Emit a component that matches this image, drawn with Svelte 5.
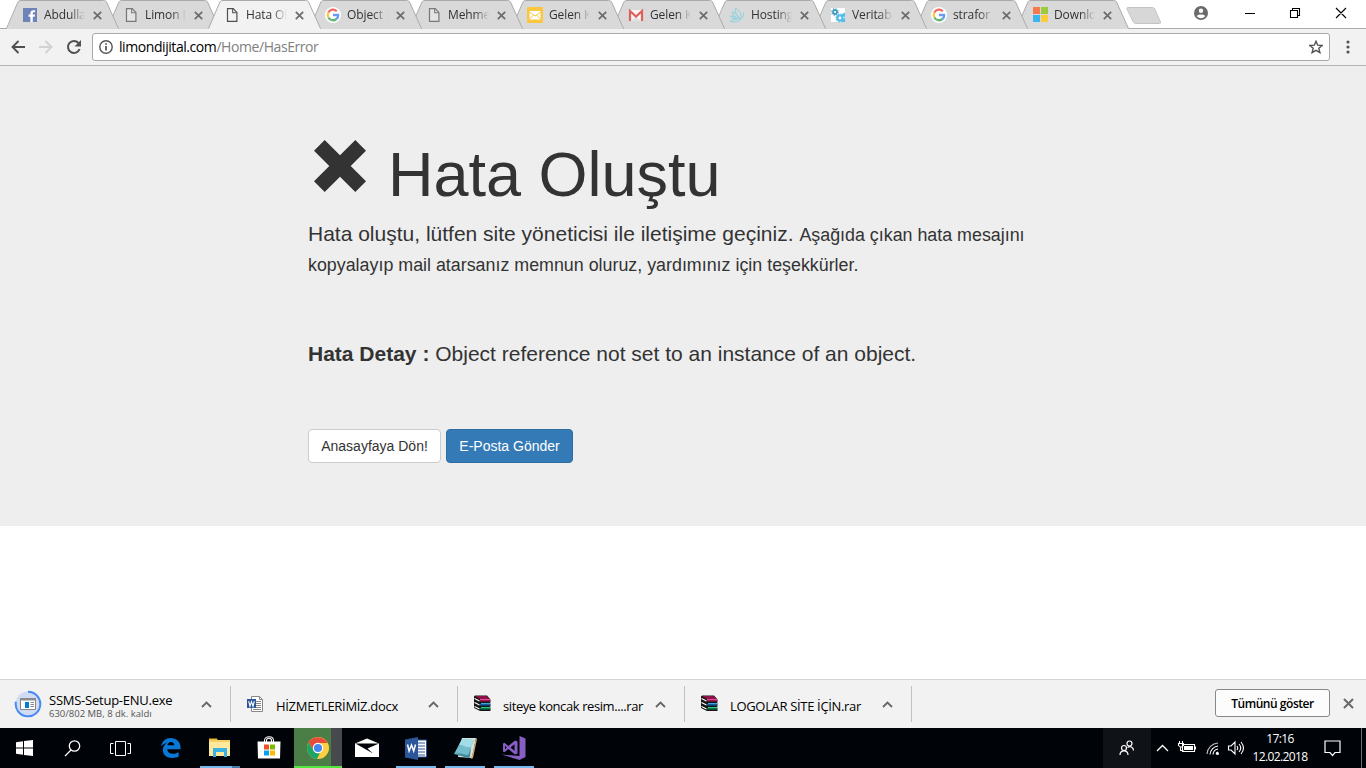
<script>
  const tabs = [
    { icon: 'facebook', title: 'Abdulla' },
    { icon: 'doc', title: 'Limon D' },
    { icon: 'doc', title: 'Hata Ol', active: true },
    { icon: 'google', title: 'Object r' },
    { icon: 'doc', title: 'Mehme' },
    { icon: 'slides', title: 'Gelen K' },
    { icon: 'gmail', title: 'Gelen K' },
    { icon: 'bird', title: 'Hosting' },
    { icon: 'gears', title: 'Veritaba' },
    { icon: 'google', title: 'strafor l' },
    { icon: 'microsoft', title: 'Downlo' }
  ];
  const downloads = [
    { icon: 'setup', name: 'SSMS-Setup-ENU.exe', note: '630/802 MB, 8 dk. kaldı', ls: -0.24 },
    { icon: 'docx', name: 'HİZMETLERİMİZ.docx', ls: -0.3 },
    { icon: 'rar', name: 'siteye koncak resim....rar', ls: -0.41 },
    { icon: 'rar', name: 'LOGOLAR SİTE İÇİN.rar', ls: -0.33 }
  ];
  const apps = ['edge', 'files', 'store', 'chrome', 'mail', 'word', 'notes', 'vs'];
</script>

{#snippet cross(size = 9)}
  <svg class="cross" width={size} height={size} viewBox="0 0 9 9"><path d="M.8.8 8.2 8.2M8.2.8.8 8.2" fill="none" stroke="currentColor" stroke-width="1.7" /></svg>
{/snippet}

{#snippet favicon(name)}
  <svg width="16" height="16" viewBox="0 0 16 16">
    {#if name === 'facebook'}
      <path fill="#6e83b7" d="M1 1h14v14H1z" />
      <path fill="#fff" d="M8.4 15V9.8H6.6V7.6h1.8V6.2c0-2 1.2-3 3-3h1.7v2.1h-1.2c-.9 0-1.1.4-1.1 1.1v1.2H13l-.3 2.2h-1.9V15z" />
    {:else if name === 'doc'}
      <path fill="#f4f4f4" fill-opacity=".4" stroke="currentColor" stroke-width="1.2" d="M3.500 1.600h5.700l3.700 3.800v9H3.500z" />
      <path fill="none" stroke="currentColor" stroke-width="1.100" d="M8.700 1.800v4h4" />
    {:else if name === 'google'}
      <circle cx="8" cy="8" r="8" fill="#fff" />
      <g fill="none" stroke-width="2.3">
        <path stroke="#ef6a5f" d="M3.3 5.6A5.2 5.2 0 0 1 11.8 4.3" />
        <path stroke="#fbc84a" d="M3.4 10.4A5.2 5.2 0 0 1 3.3 5.6" />
        <path stroke="#63b879" d="M11.4 12A5.2 5.2 0 0 1 3.4 10.4" />
        <path stroke="#6b9cf3" d="M8 8h5.2c.1 1.6-.5 3-1.8 4" />
      </g>
    {:else if name === 'slides'}
      <rect width="16" height="16" rx="1" fill="#fbc740" />
      <path fill="#fff" d="M2.500 4h11v8.500h-11z" />
      <path fill="none" stroke="#fbc740" stroke-width="1" d="m2.500 5 5.500 4 5.500-4M2.500 12l4-4M13.500 12l-4-4" />
    {:else if name === 'gmail'}
      <path fill="#f7f7f7" d="M1 3h14v11H1z" />
      <path fill="#e2e2e2" d="M3 14 8 9.500 13 14z" />
      <path fill="none" stroke="#df6057" stroke-width="2.200" d="M2 14V4l6 5.600L14 4v10" />
    {:else if name === 'bird'}
      <g fill="none" stroke="#77cfdf" stroke-width=".8">
        <path d="M1 14.500c3-2 5-2.500 8-2.500 4 0 6-2.500 5.500-6.500M1 14.500c5 .8 9 .5 11.500-3" />
        <path d="M11.500 11C8 10 5.500 5 6.500 1c3 2 5.500 5 6 9" />
        <path d="M9 11.500C5.500 10.500 4 8 3.300 5c3 .8 5.500 3 6.700 5.500" />
        <path d="M7 12C4.500 11.500 2.500 10.500 1.500 9c2.500 0 4.500.5 6.500 2" />
      </g>
    {:else if name === 'gears'}
      <path fill="#fff" d="M1 1h14v14H1z" />
      <circle cx="5" cy="5" r="2" fill="none" stroke="#3f9ac0" stroke-width="1.800" />
      <circle cx="5" cy="5" r="3.200" fill="none" stroke="#3f9ac0" stroke-width="1.200" stroke-dasharray="1.250 1.260" />
      <circle cx="10" cy="11" r="2.600" fill="none" stroke="#55bdeb" stroke-width="2.400" />
      <circle cx="10" cy="11" r="4" fill="none" stroke="#55bdeb" stroke-width="1" stroke-dasharray="1.600 1.540" />
      <path fill="#55bdeb" d="m12 7 3-1.500V15h-3z" /><circle cx="14" cy="10.500" r="1" fill="#b9e6f9" />
    {:else if name === 'microsoft'}
      <path fill="#f8784f" d="M1 0h7v7H1z" /><path fill="#9ccb3b" d="M9 0h7v7H9z" />
      <path fill="#3ab5f1" d="M1 8h7v7H1z" /><path fill="#fecb3a" d="M9 8h7v7H9z" />
    {/if}
  </svg>
{/snippet}

{#snippet fileIcon(name)}
  {#if name === 'setup'}
    <svg class="setup" width="28" height="28" viewBox="0 0 28 28">
      <circle cx="14" cy="14" r="12.500" fill="#d0dcf4" />
      <path d="M14 1.700A12.300 12.300 0 1 1 1.900 11.800" fill="none" stroke="#4a89f3" stroke-width="2" />
      <path fill="#fff" stroke="#858585" d="M6.500 8.500h15v11h-15z" />
      <path fill="#8b8b8b" d="M6 8h16v2.500H6z" /><path fill="#0878d5" d="M11 12h4v6h-4z" />
      <path stroke="#888" d="M16.500 12.500h3.500M16.500 14.500h3.500M16.500 16.500h3.500" />
    </svg>
  {:else if name === 'docx'}
    <svg width="16" height="16" viewBox="0 0 16 16">
      <path fill="#fff" stroke="#888" d="M4.500.5h8l3 3v12h-11z" /><path fill="none" stroke="#888" d="M12.500.5v3h3M9 5.500h5M9 7.500h5M9 9.500h5M9 11.500h5M6 13.500h8" />
      <path fill="#2b579a" d="M0 3h9v9H0z" /><path d="m1.700 5.200 1.300 5 1.500-4.500 1.500 4.500 1.300-5" fill="none" stroke="#fff" stroke-width="1.100" />
    </svg>
  {:else}
    <svg class="rar" width="17" height="17" viewBox="0 0 17 17">
      <path fill="#161616" d="M0 1.500 1 .5h12l3.500 4v3l-1 .5 1 .5v3l-1 .5 1 .5v3.500H6L0 13z" />
      <path fill="#8e1248" d="m1.500 1.500.5-.5h10.500l3 3H6z" /><path fill="#e54d92" d="M6 4h10v1H6z" /><path fill="#9c1451" d="M6 5h10v1.500H6z" />
      <path fill="#3da7e5" d="M7 8h9v1H7z" /><path fill="#0f62a8" d="M6 9h10v1.500H6z" />
      <path fill="#2fc58f" d="M7 12h9v1H7z" /><path fill="#087a45" d="M6 13h10v1.500H6z" />
      <path fill="none" stroke="#fff" stroke-width="1.100" d="m.5 3.500 5 2.500M.5 7.500l5 2.500M.5 11.500l5 2.500" />
    </svg>
  {/if}
{/snippet}

{#snippet appIcon(name)}
  <svg width="26" height="26" viewBox="0 0 26 26">
    {#if name === 'edge'}
      <path fill="#0878d7" d="M3 11.600C4 6 8 3 12.500 3 18.500 3 22.500 7 22.500 12v2.200H9.300c.2 3.300 2.900 4.600 6 4.600 2.100 0 4-.6 5.400-1.500v4.300C19 22.600 16.800 23 14.500 23 8.300 23 4.800 19.500 4.800 15c0-3.200 1.700-5.800 4.700-7.200C6.900 8.100 4.700 9.400 3 11.600Zm6.400-1.400h6.900c0-2-1.200-3.300-3.300-3.300-1.900 0-3.200 1.300-3.600 3.300Z" />
    {:else if name === 'files'}
      <path fill="#e9bb35" d="M2 3.500h8l1 2.500H2z" /><path fill="#ffe79c" d="M2 6h21v15H2z" /><path fill="#f3cf68" d="M2 5h21v2H2z" />
      <path fill="#38b1e4" d="M6 13h14v9h-3v-5H9v5H6z" />
    {:else if name === 'store'}
      <path d="M8.500 7V5.500c0-5 9-5 9 0V7M10.500 7V5.500c0-3 5-3 5 0V7" fill="none" stroke="#fff" stroke-width="1.100" /><path fill="#fff" d="M1.500 6.500h23L24 23.500H2z" />
      <path fill="#f25022" d="M8 9.500h5v5H8z" /><path fill="#7fba00" d="M14 9.500h5v5h-5z" /><path fill="#00a4ef" d="M8 15.500h5v5H8z" /><path fill="#ffb900" d="M14 15.500h5v5h-5z" />
    {:else if name === 'chrome'}
      <circle cx="13" cy="13" r="11" fill="#ffcf41" />
      <path fill="#e64b3c" d="M3.500 7.500A11 11 0 0 1 22.600 8H13a5 5 0 0 0-4.400 7.500z" />
      <path fill="#1ba566" d="M3.500 7.500 8.600 15.500A5 5 0 0 0 15 17.700L12 24A11 11 0 0 1 3.500 7.500Z" />
      <circle cx="13" cy="13" r="5.200" fill="#fff" /><circle cx="13" cy="13" r="4.100" fill="#4688f1" />
    {:else if name === 'mail'}
      <path fill="#fff" d="m1 8.500 12-5 12 5V22H1z" /><path fill="#000307" d="M1.500 8.500H25L13.500 13.500l5.500 5z" />
    {:else if name === 'word'}
      <path fill="#fff" stroke="#2b579a" d="M14 5h9.500v17H14z" /><path stroke="#2b579a" stroke-width="1.200" d="M15 8h7M15 11h7M15 14h7M15 17h7M15 20h7" />
      <path fill="#2b579a" d="M2 4.500 15 2v23L2 22.500z" /><path fill="none" stroke="#fff" stroke-width="1.500" d="m4.500 9.500 1.600 6.500L8.500 10l2.200 6 1.800-6.500" />
    {:else if name === 'notes'}
      <path fill="#d5e2e4" d="M10 3h14l-4 20-14-1z" /><path fill="#72bccb" d="M10 4 22 5l-6 15L2 19z" /><path fill="#a2dce4" d="m10 4 12 1-3 7C13 13 9 9 7 10z" />
      <path fill="#438c9c" d="M2 19c5-1 8 0 14 1l3-8-1 10-2 1z" /><path fill="#d1a865" d="m24 3 1 1-4 19-2 1z" />
    {:else}
      <path fill="#875fc4" d="m18.500 1 6 2.500V22l-6 3L.5 19.500l18 1.500z" />
      <path fill="#875fc4" fill-rule="evenodd" d="m2 8.500 1.500-.7 3.800 3.200L14 5.500l2.500 1v12l-2.500 1-6.700-5.500-3.800 3.200L2 16.500zm2 2.300v3.500l1.800-1.800zM9.500 12.500l4 3.200V9.300z" />
    {/if}
  </svg>
{/snippet}

<div class="screen">
  <header class="tabstrip">
    <div class="tabs">
      {#each tabs as tab, i}
        <div class="tab" class:active={tab.active} style:z-index={tab.active ? 30 : 20 - i}>
          <svg class="shape" width="114" height="29" viewBox="0 0 114 29">
            <path class="fill" d="M0 29 1 28.500L11.500 3C12.500 1 13 .5 15 .5H97.500C99.500.5 100 1 101 3L112.500 28.500V29Z" />
            <path d="M.5 28.500 11.500 3C12.500 1 13 .5 15 .5H97.500C99.500.5 100 1 101 3L112.500 28.500" fill="none" stroke="#aaa" />
          </svg>
          <span class="favicon">{@render favicon(tab.icon)}</span>
          <span class="title">{tab.title}</span>
          {@render cross()}
        </div>
      {/each}
    </div>
    <svg class="newtab" width="36" height="19" viewBox="0 0 36 19"><path d="M1.500 1.500h25q1.500 0 2.200 1.500L34.500 16q.5 1.500-1 1.500H10q-2 0-3-2L1 3q-.5-1.500.5-1.500z" fill="#d7d7d7" stroke="#c4c4c4" /></svg>
    <svg class="user" width="14" height="14" viewBox="0 0 14 14"><circle cx="7" cy="7" r="7" fill="#6b6b6b" /><circle cx="7" cy="4.800" r="2.200" fill="#fff" /><path d="M2.700 10.300C3.500 7.800 10.500 7.800 11.300 10.300Q7 14 2.700 10.300" fill="#fff" /></svg>
    <svg class="controls" width="104" height="12" viewBox="0 0 104 12"><path d="M1 6.500h10M46.500 3.500h7v7h-7zM48.500 3V1.500h7v7H54M92 1l10 10M102 1 92 11" fill="none" stroke="#000" stroke-width="1.100" /></svg>
  </header>

  <nav class="toolbar">
    <svg class="nav" width="72" height="16" viewBox="0 0 72 16">
      <path d="M15 8H2.500M8.500 2l-6 6 6 6" fill="none" stroke="#505050" stroke-width="1.900" />
      <path d="M29 8h12.500M35.500 2l6 6-6 6" fill="none" stroke="#d2d2d2" stroke-width="1.900" />
      <path d="M68.500 4A6 6 0 1 0 69.600 10" fill="none" stroke="#505050" stroke-width="2" /><path d="M71 1v6.500h-6.500z" fill="#505050" />
    </svg>
    <div class="omnibox">
      <svg width="14" height="14" viewBox="0 0 14 14"><circle cx="7" cy="7" r="6.200" fill="none" stroke="#555" stroke-width="1.400" /><path d="M7 6v4.500M7 3.200v1.600" stroke="#444" stroke-width="1.600" /></svg>
      <span class="url">limondijital.com<i>/Home/HasError</i></span>
      <svg class="star" width="14" height="14" viewBox="0 0 14 14"><path d="m7 1.300 1.700 3.900 4.500.3-3.400 2.800 1.100 4.300L7 10.300l-3.900 2.300 1.100-4.300L.8 5.500l4.500-.3z" fill="none" stroke="#505050" stroke-width="1.400" /></svg>
    </div>
    <svg class="menu" width="4" height="14" viewBox="0 0 4 14"><g fill="#555"><circle cx="2" cy="2" r="1.600" /><circle cx="2" cy="7" r="1.600" /><circle cx="2" cy="12" r="1.600" /></g></svg>
  </nav>

  <main>
    <section class="jumbotron">
      <h1>
        <svg width="52" height="52" viewBox="0 0 52 52"><path d="M10.700 0 26 15.300 41.300 0 52 10.700 36.700 26 52 41.300 41.300 52 26 36.700 10.700 52 0 41.300 15.300 26 0 10.700z" fill="#333" /></svg>
        <span>Hata Oluştu</span>
      </h1>
      <p class="message">Hata oluştu, lütfen site yöneticisi ile iletişime geçiniz. <small>Aşağıda çıkan hata mesajını kopyalayıp mail atarsanız memnun oluruz, yardımınız için teşekkürler.</small></p>
      <p class="detail"><b>Hata Detay :</b> Object reference not set to an instance of an object.</p>
      <div class="buttons"><button class="home">Anasayfaya Dön!</button><button class="primary">E-Posta Gönder</button></div>
    </section>
  </main>

  <aside class="downloads">
    {#each downloads as item}
      <div class="download" class:busy={item.note}>
        <span class="file">{@render fileIcon(item.icon)}</span>
        <div class="label"><span style:letter-spacing="{item.ls}px">{item.name}</span>{#if item.note}<small>{item.note}</small>{/if}</div>
        <svg class="chevron" width="11" height="7" viewBox="0 0 11 7"><path d="m1 6 4.500-4.500L10 6" fill="none" stroke="#666" stroke-width="1.800" /></svg>
      </div>
    {/each}
    <button class="showall">Tümünü göster</button>
    {@render cross(11)}
  </aside>

  <footer class="taskbar">
    <div class="system"><svg width="17" height="16" viewBox="0 0 17 16"><path fill="#fff" d="M0 2.300 7 1.300v6.200H0zM8 1.100 17 0v7.500H8zM0 8.500h7v6.200l-7-1zM8 8.500h9V16l-9-1.100z" /></svg></div>
    <div class="system"><svg width="17" height="17" viewBox="0 0 17 17"><circle cx="10.500" cy="6" r="5.200" fill="none" stroke="#fff" stroke-width="1.300" /><path d="m7 10-6 6" stroke="#fff" stroke-width="1.300" /></svg></div>
    <div class="system"><svg width="21" height="15" viewBox="0 0 21 15"><path d="M5.500.5h10v14h-10zM3.500 2.500h-3v10h3M17.500 2.500h3v10h-3" fill="none" stroke="#fff" /></svg></div>
    <div class="apps">
      {#each apps as app}<div class="app {app}">{@render appIcon(app)}</div>{/each}
    </div>
    <div class="people"><svg width="16" height="16" viewBox="0 0 16 16"><g fill="none" stroke="#fff" stroke-width="1.200"><circle cx="10.500" cy="3.500" r="2.500" /><circle cx="5" cy="8" r="2.500" /><path d="M1 15c0-5.500 8-5.500 8 0M8.500 7.500C11 5.500 14.500 7 14.500 10.500" /></g></svg></div>
    <svg class="tray" width="89" height="16" viewBox="0 0 89 16">
      <path d="m1 11 5.500-5.500L12 11" fill="none" stroke="#fff" stroke-width="1.300" />
      <path d="M26.500 4.500h12v7h-12zM39.500 6.500v3M24.500 7.500v3h3M22.500 3.500h5v2q-2.500 3-5 0zM23.500 3V1M26.500 3V1" fill="none" stroke="#fff" stroke-width="1.100" /><path fill="#fff" d="M28 6h9v4h-9z" />
      <g fill="none" stroke="#fff" stroke-width="1.100"><path d="M51 14A12 12 0 0 1 62 3" opacity=".75" /><path d="M54 14.500A9 9 0 0 1 62 6M57 14.500A6 6 0 0 1 62 9M60 14a3 3 0 0 1 2-2" /></g><circle cx="61.500" cy="13.500" r="1.500" fill="#fff" />
      <path d="M72.500 6h2.500l4-4v12l-4-4h-2.500zM81 6q1.500 2 0 4M83 4q3.500 4 0 8M85 2q5 6 0 12" fill="none" stroke="#fff" stroke-width="1.100" />
    </svg>
    <div class="clock"><span>17:16</span><span>12.02.2018</span></div>
    <svg class="notify" width="17" height="17" viewBox="0 0 17 17"><path d="M1 1h15v11.500h-5L8.500 15.500 6 12.500H1z" fill="none" stroke="#fff" stroke-width="1.200" /></svg>
    <div class="desktop"></div>
  </footer>
</div>

<style>
  :global(body) { margin: 0; overflow: hidden; }
  .screen { width: 1366px; height: 768px; display: flex; flex-direction: column; background: #fff; font-family: 'Open Sans', 'Noto Sans', sans-serif; color: #000; }
  svg { display: block; flex: none; }
  button { font: inherit; box-sizing: border-box; padding: 0; white-space: nowrap; }
  .cross { color: #6b6b6b; }

  .tabstrip { height: 29px; box-sizing: border-box; display: flex; background: linear-gradient(#aaa, #aaa) 0 28px / 100% 1px no-repeat #fff; }
  .tabs { display: flex; padding-left: 6px; width: 1121px; flex: none; isolation: isolate; }
  .tab { width: 114px; height: 29px; margin-right: -13px; position: relative; isolation: isolate; display: flex; align-items: center; flex: none; box-sizing: border-box; padding-left: 16px; color: #777; }
  .shape { position: absolute; inset: 0; z-index: -1; }
  .fill { fill: #d9d9d9; }
  .tab:not(.active) { background: linear-gradient(#aaa, #aaa) 1px 28px / 112px 1px no-repeat; }
  .active { color: #505050; }
  .active .fill { fill: #f2f2f2; }
  .favicon { margin-top: 1px; }
  .title { width: 41px; margin-left: 6px; overflow: hidden; white-space: nowrap; font-size: 12px; letter-spacing: -.1px; line-height: 18px; color: #333; mask-image: linear-gradient(90deg, #000 64%, transparent 100%); }
  .tab .cross { margin: 1px 0 0 8px; }
  .newtab { margin: 6px 0 0 -1px; }
  .user { margin: 6px 0 0 32px; }
  .controls { margin: 7px 0 0 36px; }

  .toolbar { height: 37px; box-sizing: border-box; display: flex; align-items: center; background: #f2f2f2; border-bottom: 1px solid #b5b5b5; padding-left: 10px; }
  .omnibox { display: flex; align-items: center; width: 1238px; height: 28px; margin-left: 10px; box-sizing: border-box; border: 1px solid #a9a9a9; border-radius: 3px; background: #fff; padding: 0 6px; }
  .url { margin-left: 6px; font-size: 14px; line-height: 20px; letter-spacing: -.43px; }
  .url i { font-style: normal; color: #808080; }
  .star { margin-left: auto; }
  .menu { margin-left: 16px; }

  main { height: 613px; font-family: 'Liberation Sans', Arial, sans-serif; color: #333; }
  .jumbotron { height: 460px; box-sizing: border-box; padding: 73px 308px 0; background: #eee; }
  h1 { margin: 0; display: flex; height: 80px; font-size: 63px; font-weight: 400; line-height: 71px; padding-left: 5.5px; }
  h1 svg { margin-top: .5px; }
  h1 span { margin-left: 22.5px; }
  p { margin: 0; font-size: 21px; line-height: 30px; }
  .message { height: 120px; line-height: 1.42; }
  .message small { font-size: 17.85px; line-height: 1; }
  .detail { height: 90px; }
  .buttons { display: flex; gap: 5px; font-size: 14px; }
  .buttons button { height: 34px; border: 1px solid #ccc; border-radius: 4px; background: #fff; color: #333; width: 133px; }
  .buttons .primary { background: #337ab7; border-color: #2e6da4; color: #fff; width: 127px; }

  .downloads { height: 49px; box-sizing: border-box; border-top: 1px solid #d5d5d5; background: #f2f2f2; display: flex; align-items: center; }
  .download { box-sizing: border-box; width: 227px; height: 36px; border-right: 1px solid #c2c2c2; display: flex; align-items: center; padding-left: 16px; }
  .download.busy { width: 231px; padding-left: 14px; }
  .file { width: 29px; flex: none; }
  .file svg { margin-top: -1px; }
  .busy .file { width: 35px; }
  .label { display: flex; flex-direction: column; width: 143px; font-size: 13px; line-height: 15px; padding-top: 5px; white-space: nowrap; }
  .busy .label { padding-top: 3px; }
  .label small { font-size: 9.5px; line-height: 11px; color: #555; }
  .chevron { margin-left: 9px; }
  .showall { width: 115px; height: 28px; margin: -2px 13px 0 auto; border: 1px solid #888; border-radius: 3px; background: #fcfcfc; font-size: 12px; font-weight: 600; letter-spacing: -.45px; }
  .downloads > .cross { margin: -2px 12px 0 0; }

  .taskbar { height: 40px; background: #000307; display: flex; align-items: center; color: #fff; }
  .system { width: 48px; height: 40px; display: flex; align-items: center; justify-content: center; }
  .apps { display: flex; gap: 1px; padding-left: 3px; }
  .app { width: 48px; height: 40px; display: flex; align-items: center; justify-content: center; }
  .files { background: linear-gradient(90deg, #76b9ed 32px, #467ca5 32px) 4px 38px / 40px 2px no-repeat; }
  .word, .notes, .vs { background: linear-gradient(#76b9ed, #76b9ed) 4px 38px / 40px 2px no-repeat; }
  .chrome { background: linear-gradient(#52e63e, #52e63e) 0 38px / 48px 2px no-repeat, linear-gradient(90deg, #4b7d47 37px, #48494d 37px); }
  .people { width: 48px; height: 40px; margin-left: auto; background: #0f1217; display: flex; align-items: center; justify-content: center; }
  .tray { margin-left: 5px; }
  .clock { width: 64px; margin-left: 3px; display: flex; flex-direction: column; align-items: center; font-size: 12px; line-height: 18px; letter-spacing: -.6px; }
  .notify { margin-left: 12px; }
  .desktop { width: 5px; height: 40px; margin-left: 20px; border-left: 1px solid #6a6c70; box-sizing: border-box; }
</style>
